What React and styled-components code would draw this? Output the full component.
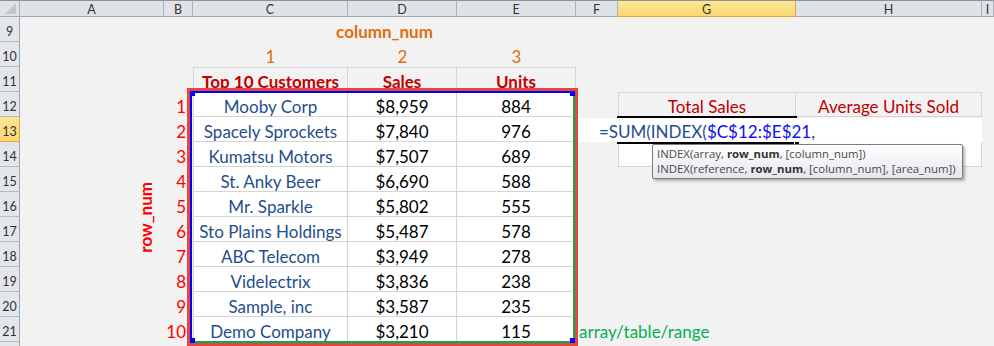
import React from "react";
import styled, { createGlobalStyle, css } from "styled-components";

const GlobalStyle = createGlobalStyle`
  html, body {
    margin: 0;
    padding: 0;
    background: #f2f2f2;
  }
  body {
    overflow: hidden;
  }
`;

const customers = [
  ["Mooby Corp", "$8,959", 884],
  ["Spacely Sprockets", "$7,840", 976],
  ["Kumatsu Motors", "$7,507", 689],
  ["St. Anky Beer", "$6,690", 588],
  ["Mr. Sparkle", "$5,802", 555],
  ["Sto Plains Holdings", "$5,487", 578],
  ["ABC Telecom", "$3,949", 278],
  ["Videlectrix", "$3,836", 238],
  ["Sample, inc", "$3,587", 235],
  ["Demo Company", "$3,210", 115],
];

const columns = ["A", "B", "C", "D", "E", "F", "G", "H", "I"];
const rows = [9, 10, 11, 12, 13, 14, 15, 16, 17, 18, 19, 20, 21];

// excel row number -> grid row
const R = (n) => n - 7;

const place = css`
  grid-column: ${(p) => p.$c} / span ${(p) => p.$cs || 1};
  grid-row: ${(p) => p.$r} / span ${(p) => p.$rs || 1};
`;

const Sheet = styled.div`
  display: grid;
  grid-template-columns: 20px 144px 29px 155px 109px 119px 42px 178px 186px 1fr;
  grid-template-rows: 17px repeat(13, 25px) 1fr;
  width: 994px;
  height: 346px;
  overflow: hidden;
  background: #f2f2f2;
  font-family: Lato, "Liberation Sans", sans-serif;
`;

const Corner = styled.div`
  grid-column: 1;
  grid-row: 1;
  box-sizing: border-box;
  background: #dfe3e8;
  border-top: 1px solid #8e939a;
  border-right: 1px solid #aab1ba;
  border-bottom: 1px solid #9ea6b0;
  position: relative;

  &::after {
    content: "";
    position: absolute;
    right: 3px;
    bottom: 2px;
    width: 11px;
    height: 11px;
    background: #c3c7cd;
    clip-path: polygon(100% 0, 100% 100%, 0 100%);
  }
`;

const ColHeader = styled.div`
  grid-column: ${(p) => p.$c};
  grid-row: 1;
  box-sizing: border-box;
  display: flex;
  align-items: center;
  justify-content: center;
  padding-top: 1px;
  border-top: 1px solid #8e939a;
  border-right: 1px solid ${(p) => (p.$active ? "#e2a83a" : "#aab1ba")};
  border-bottom: 1px solid ${(p) => (p.$active ? "#e2a83a" : "#9ea6b0")};
  background: ${(p) =>
    p.$active ? "linear-gradient(#fde795, #f9d670)" : "#dfe3e8"};
  color: #333;
  font-size: 12.5px;
`;

const RowHeader = styled.div`
  grid-column: 1;
  grid-row: ${(p) => p.$r};
  box-sizing: border-box;
  display: flex;
  align-items: center;
  justify-content: center;
  padding-top: 4px;
  overflow: hidden;
  border-right: 1px solid ${(p) => (p.$active ? "#e2a83a" : "#9ea6b0")};
  border-bottom: 1px solid ${(p) => (p.$active ? "#e2a83a" : "#b4bbc4")};
  background: ${(p) =>
    p.$active ? "linear-gradient(#fde795, #f9d670)" : "#e3e6eb"};
  color: #333;
  font-size: 12.5px;
`;

const Cell = styled.div`
  ${place};
  display: flex;
  align-items: center;
  justify-content: ${(p) =>
    ({ left: "flex-start", right: "flex-end" })[p.$align] || "center"};
  box-sizing: border-box;
  min-width: 0;
  padding: 4px ${(p) => p.$pad || 0}px 0;
  white-space: nowrap;
  font-size: 17px;
  font-weight: ${(p) => (p.$bold ? 700 : 400)};
  color: ${(p) => p.$color || "#000"};
  background: ${(p) => p.$bg || "transparent"};
  ${(p) =>
    p.$grid &&
    css`
      border-right: 1px solid #d4d4d4;
      border-bottom: 1px solid #d4d4d4;
    `}
  ${(p) => p.$top && "border-top: 1px solid #d4d4d4;"}
  ${(p) => p.$left && "border-left: 1px solid #d4d4d4;"}
`;

const Vertical = styled.span`
  writing-mode: vertical-rl;
  transform: rotate(180deg);
`;

const RowNumLabel = styled(Cell)`
  padding: 0 8px 0 0;
`;

const RangeOutline = styled.div`
  ${place};
  margin: -4px -2px -4px -6px;
  border: 3px solid #e8453c;
  position: relative;
  z-index: 3;
  pointer-events: none;
`;

const RangeInner = styled.div`
  box-sizing: border-box;
  height: 100%;
  position: relative;
  border-left: 2px solid #0000ff;
  border-top: 2px solid #0000ff;
  border-right: 2px solid #00b050;
  border-bottom: 2px solid #00b050;
`;

const Handle = styled.span`
  position: absolute;
  width: 5px;
  height: 5px;
  background: #0000ff;
  ${(p) => (p.$top ? "top: -2px;" : "bottom: -2px;")}
  ${(p) => (p.$left ? "left: -2px;" : "right: -2px;")}
`;

const ActiveCell = styled.div`
  ${place};
  margin: -1px -1px -2px -1px;
  border-top: 2px solid #000;
  border-bottom: 2px solid #000;
  position: relative;
  z-index: 1;
`;

const FillHandle = styled.span`
  position: absolute;
  right: -2px;
  bottom: -4px;
  width: 4px;
  height: 4px;
  background: #000;
  border: 1px solid #fff;
  border-right: 0;
`;

const Editor = styled.div`
  ${place};
  margin: 1px 0 0 0;
  background: #fff;
  position: relative;
  z-index: 2;
`;

const Formula = styled(Cell)`
  position: relative;
  z-index: 4;
  color: #1f4e8c;
`;

const Ref = styled.span`
  color: #1010f0;
`;

const TipAnchor = styled.div`
  ${place};
  position: relative;
  z-index: 5;
`;

const Tooltip = styled.div`
  position: absolute;
  top: 2px;
  left: 34px;
  padding: 1px 6px 2px 4px;
  border: 1px solid #7a7a7a;
  border-radius: 2px;
  background: linear-gradient(#ffffff, #e6e6ee);
  box-shadow: 2px 2px 3px rgba(0, 0, 0, 0.3);
  font-family: "Open Sans", "Noto Sans", sans-serif;
  font-size: 11.4px;
  line-height: 15px;
  color: #4a4a4a;
  white-space: nowrap;

  b {
    font-weight: 700;
    color: #333;
  }
`;

const NAVY = "#1f4e8c";
const DARK_RED = "#c00000";
const ORANGE = "#e46c0a";

const App = () => {
  return (
    <>
      <GlobalStyle />
      <Sheet>
        <Corner />
        {columns.map((c, i) => (
          <ColHeader key={c} $c={i + 2} $active={c === "G"}>
            {c}
          </ColHeader>
        ))}
        {rows.map((n) => (
          <RowHeader key={n} $r={R(n)} $active={n === 13}>
            {n}
          </RowHeader>
        ))}
        <RowHeader $r={R(22)} />

        <Cell $c={4} $cs={3} $r={R(9)} $bold $color={ORANGE}>
          column_num
        </Cell>
        {[1, 2, 3].map((n) => (
          <Cell key={n} $c={n + 3} $r={R(10)} $color={ORANGE}>
            {n}
          </Cell>
        ))}

        <Cell $c={4} $r={R(11)} $grid $top $left $bold $color={DARK_RED}>
          Top 10 Customers
        </Cell>
        <Cell $c={5} $r={R(11)} $grid $top $bold $color={DARK_RED}>
          Sales
        </Cell>
        <Cell $c={6} $r={R(11)} $grid $top $bold $color={DARK_RED}>
          Units
        </Cell>

        {customers.map(([name, sales, units], i) => (
          <React.Fragment key={name}>
            <Cell $c={3} $r={R(12 + i)} $align="right" $pad={7} $color="#ff0000">
              {i + 1}
            </Cell>
            <Cell $c={4} $r={R(12 + i)} $grid $left $bg="#fff" $color={NAVY}>
              {name}
            </Cell>
            <Cell $c={5} $r={R(12 + i)} $grid $bg="#fff">
              {sales}
            </Cell>
            <Cell $c={6} $r={R(12 + i)} $grid $bg="#fff">
              {units}
            </Cell>
          </React.Fragment>
        ))}

        <RowNumLabel $c={2} $r={R(12)} $rs={10} $align="right" $bold $color="#ff0000">
          <Vertical>row_num</Vertical>
        </RowNumLabel>

        <Cell $c={7} $r={R(21)} $align="left" $pad={3} $color="#00b050">
          array/table/range
        </Cell>

        <Cell $c={8} $r={R(12)} $grid $top $left $color={DARK_RED}>
          Total Sales
        </Cell>
        <Cell $c={9} $r={R(12)} $grid $top $color={DARK_RED}>
          Average Units Sold
        </Cell>
        <Cell $c={8} $r={R(14)} $grid $left $bg="#fff" />
        <Cell $c={9} $r={R(14)} $grid $bg="#fff" />

        <ActiveCell $c={8} $r={R(13)}>
          <FillHandle />
        </ActiveCell>
        <Editor $c={7} $cs={3} $r={R(13)} />
        <Formula $c={8} $r={R(13)}>
          =SUM(INDEX(<Ref>$C$12:$E$21</Ref>,
        </Formula>
        <TipAnchor $c={8} $r={R(14)}>
          <Tooltip>
            <div>
              INDEX(array, <b>row_num</b>, [column_num])
            </div>
            <div>
              INDEX(reference, <b>row_num</b>, [column_num], [area_num])
            </div>
          </Tooltip>
        </TipAnchor>

        <RangeOutline $c={4} $cs={3} $r={R(12)} $rs={10}>
          <RangeInner>
            <Handle $top $left />
            <Handle $top />
            <Handle $left />
            <Handle />
          </RangeInner>
        </RangeOutline>
      </Sheet>
    </>
  );
};

export default App;
